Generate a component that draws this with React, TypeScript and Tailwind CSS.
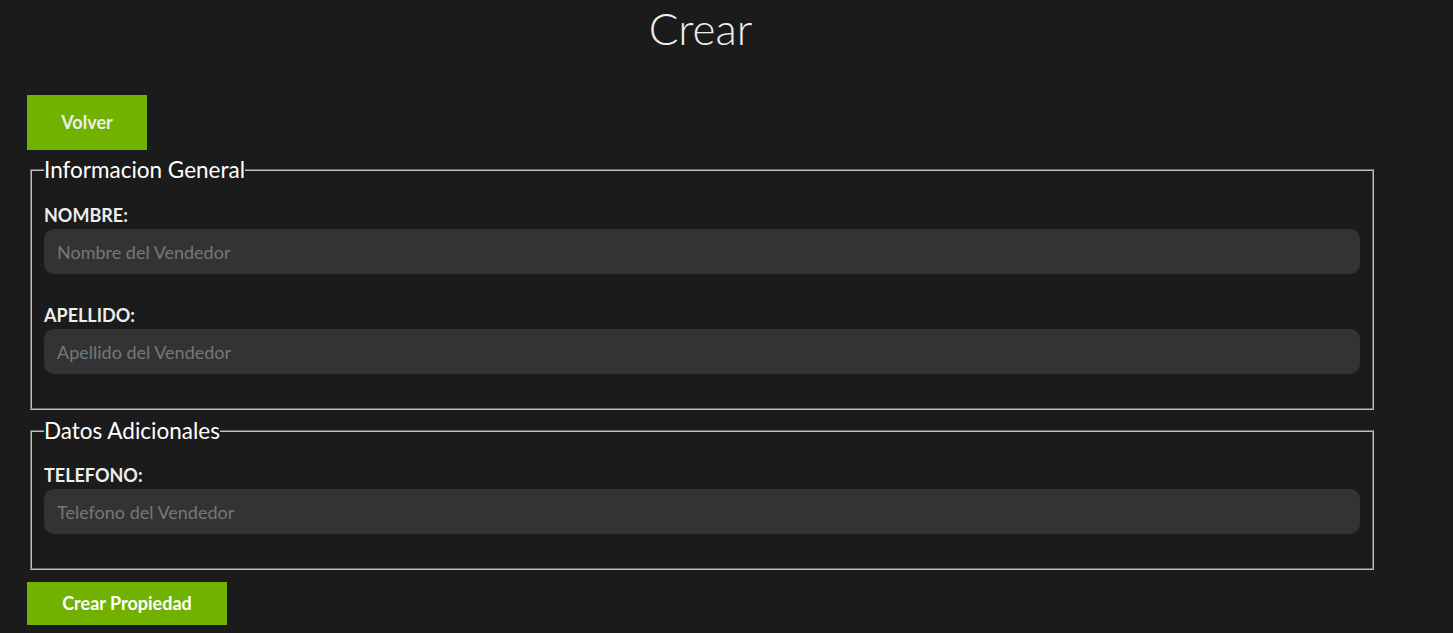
import React from "react";

function Field({ label, placeholder }: { label: string; placeholder: string }) {
  return (
    <div className="flex flex-col">
      <label className="text-[18px] leading-[24px] font-bold text-[#eeeeee]">{label}</label>
      <input
        type="text"
        placeholder={placeholder}
        className="mt-[2px] h-[45px] w-full rounded-[10px] bg-[#333333] px-[13px] text-[18px] text-[#dddddd] placeholder:text-[#777777] outline-none"
      />
    </div>
  );
}

export default function App() {
  return (
    <div
      className="min-h-screen w-full bg-[#1b1b1b] text-white"
      style={{ fontFamily: "Lato, 'Open Sans', sans-serif" }}
    >
      <div className="ml-[27px] w-[1347px] pb-2">
        <h1 className="pt-[2px] text-center text-[44px] leading-[52px] font-light text-[#eeeeee]">
          Crear
        </h1>

        {/* Back button */}
        <a
          href="#"
          className="mt-[41px] flex h-[55px] w-[120px] items-center justify-center bg-[#71b100] text-[18px] font-bold text-[#eeeeee]"
        >
          Volver
        </a>

        <form className="mt-[6px] flex flex-col">
          <fieldset className="ml-[3px] w-[1344px] border-2 border-[#c0c0c0] [border-style:groove] px-[12px] pb-[34px]">
            <legend className="text-[22.5px] leading-[27px] text-white">Informacion General</legend>
            <div className="mt-[20px] flex flex-col gap-[29px]">
              <Field label="NOMBRE:" placeholder="Nombre del Vendedor" />
              <Field label="APELLIDO:" placeholder="Apellido del Vendedor" />
            </div>
          </fieldset>

          <fieldset className="mt-[7px] ml-[3px] w-[1344px] border-2 border-[#c0c0c0] [border-style:groove] px-[12px] pb-[34px]">
            <legend className="text-[22.5px] leading-[27px] text-white">Datos Adicionales</legend>
            <div className="mt-[19px] flex flex-col">
              <Field label="TELEFONO:" placeholder="Telefono del Vendedor" />
            </div>
          </fieldset>

          <button
            type="submit"
            className="mt-[12px] h-[43px] w-[200px] bg-[#71b100] text-[18px] font-bold text-white"
          >
            Crear Propiedad
          </button>
        </form>
      </div>
    </div>
  );
}
